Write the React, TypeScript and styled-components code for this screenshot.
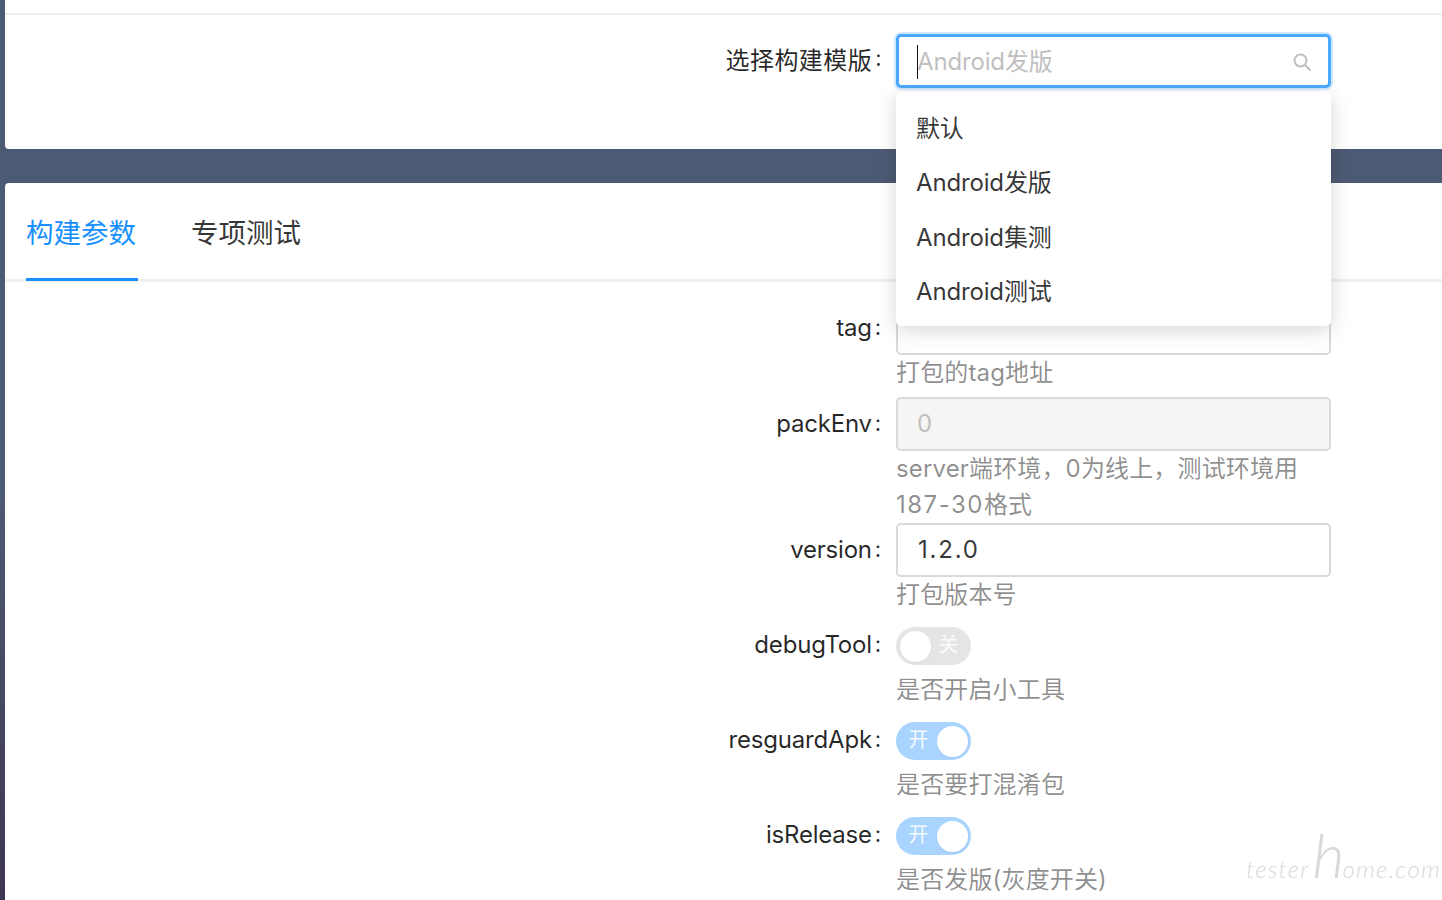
import React from "react";
import styled, { createGlobalStyle } from "styled-components";

const Global = createGlobalStyle`
  html, body { margin: 0; padding: 0; height: 900px; overflow: hidden; }
  body {
    font-family: Inter, "Noto Sans CJK SC", sans-serif;
  }
`;

const Page = styled.div`
  position: relative;
  height: 900px;
  overflow: hidden;
  padding-left: 5px;
  box-sizing: border-box;
  background: linear-gradient(180deg, #4d5a73 0%, #4d5a73 55%, #3f3552 100%);
  display: flex;
  flex-direction: column;
  gap: 34px;
`;

const Card = styled.section<{ $grow?: boolean }>`
  background: #fff;
  ${(p) =>
    p.$grow
      ? "flex: 1; border-radius: 4px 0 0 0;"
      : "height: 149px; flex: none; border-radius: 0 0 0 4px;"}
`;

const TopRule = styled.div`
  height: 2px;
  margin-top: 13px;
  background: #f0f0f0;
`;

const Row = styled.div<{ $after?: number; $before?: number }>`
  display: grid;
  grid-template-columns: 891px 435px;
  margin-top: ${(p) => p.$before ?? 0}px;
  margin-bottom: ${(p) => p.$after ?? 6}px;
`;

const Label = styled.label<{ $cjk?: boolean; $low?: boolean }>`
  height: 54px;
  display: flex;
  align-items: center;
  justify-content: flex-end;
  padding-right: ${(p) => (p.$cjk ? 14 : 15)}px;
  padding-bottom: ${(p) => (p.$cjk ? 6 : p.$low ? 0 : 2)}px;
  box-sizing: border-box;
  font-size: 24px;
  letter-spacing: ${(p) => (p.$cjk ? 0.45 : -0.2)}px;
  color: rgba(0, 0, 0, 0.85);
`;

const Colon = styled.span`
  margin-left: 3px;
  font-size: 22px;
`;

const Control = styled.div`
  min-width: 0;
`;

const Field = styled.div<{ $focus?: boolean; $off?: boolean }>`
  position: relative;
  height: 54px;
  box-sizing: border-box;
  border-radius: 5px;
  display: flex;
  align-items: center;
  padding: 0 0 ${(p) => (p.$focus ? 4 : 2)}px ${(p) => (p.$focus ? 18 : 20)}px;
  font-size: 24px;
  color: rgba(0, 0, 0, 0.8);
  border: ${(p) => (p.$focus ? "3px solid #4aa9ff" : "2px solid #d9d9d9")};
  background: ${(p) => (p.$off ? "#f5f5f5" : "#fff")};
  ${(p) => p.$focus && "box-shadow: 0 0 0 2px rgba(24, 144, 255, 0.2);"}
`;

const Placeholder = styled.span`
  color: #bfbfbf;
  letter-spacing: -0.15px;
`;

const Dim = styled.span`
  color: #bfbfbf;
  margin-left: -1px;
`;

const Value = styled.span`
  letter-spacing: 1.8px;
`;

const Caret = styled.i`
  position: absolute;
  left: 18px;
  top: 8px;
  width: 1px;
  height: 34px;
  background: #111;
`;

const SearchIcon = styled.svg`
  position: absolute;
  right: 16px;
  top: 15px;
  width: 20px;
  height: 20px;
  color: #bfbfbf;
`;

const Help = styled.div`
  font-size: 24px;
  line-height: 36px;
  letter-spacing: 0.15px;
  color: rgba(0, 0, 0, 0.45);
`;

const HelpNums = styled.span`
  letter-spacing: 1.5px;
`;

const Tabs = styled.nav`
  height: 96px;
  display: flex;
  gap: 53px;
  padding-left: 21px;
  border-bottom: 3px solid #f0f0f0;
  margin-bottom: 19px;
`;

const Tab = styled.div<{ $active?: boolean }>`
  height: 98px;
  width: 112px;
  padding-top: 31px;
  box-sizing: border-box;
  font-size: 27.5px;
  line-height: 38px;
  color: ${(p) => (p.$active ? "#1890ff" : "rgba(0, 0, 0, 0.8)")};
  ${(p) => p.$active && "border-bottom: 3px solid #1890ff;"}
`;

const SwitchWrap = styled.div`
  height: 55px;
  padding-top: 10px;
  box-sizing: border-box;
`;

const Track = styled.div<{ $on?: boolean }>`
  width: 75px;
  height: 38px;
  border-radius: 19px;
  box-sizing: border-box;
  padding: 0 3.5px;
  display: flex;
  align-items: center;
  flex-direction: ${(p) => (p.$on ? "row" : "row-reverse")};
  justify-content: space-between;
  background: ${(p) => (p.$on ? "#a9d4ff" : "#e5e5e5")};
`;

const Knob = styled.span`
  width: 31px;
  height: 31px;
  border-radius: 50%;
  background: #fff;
  box-shadow: 0 1px 2px rgba(0, 0, 0, 0.06);
`;

const SwitchText = styled.span<{ $on?: boolean }>`
  font-size: 20px;
  line-height: 32px;
  color: rgba(255, 255, 255, 0.9);
  margin: ${(p) => (p.$on ? "-3px 0 0 9px" : "-3px 9px 0 0")};
`;

const Menu = styled.ul`
  position: absolute;
  left: 896px;
  top: 92px;
  width: 435px;
  margin: 0;
  padding: 8px 0;
  list-style: none;
  background: #fff;
  border-radius: 5px;
  box-shadow: 0 4px 20px rgba(0, 0, 0, 0.17);
`;

const MenuItem = styled.li`
  height: 54.5px;
  box-sizing: border-box;
  display: flex;
  align-items: center;
  padding: 0 0 2px 20px;
  font-size: 24px;
  letter-spacing: -0.15px;
  color: rgba(0, 0, 0, 0.8);
`;

const Watermark = styled.div`
  position: absolute;
  left: 1246px;
  top: 826px;
  height: 56px;
  display: flex;
  align-items: baseline;
  white-space: nowrap;
  font-family: Lato, sans-serif;
  font-style: italic;
  font-weight: 300;
  font-size: 24px;
  line-height: 56px;
  letter-spacing: 1.3px;
  color: #d8d8d8;
`;

const WatermarkH = styled.span`
  font-size: 62px;
  line-height: 56px;
  font-weight: 300;
  letter-spacing: -2px;
  margin-left: 3px;
`;

function Switch({ on }: { on?: boolean }) {
  return (
    <SwitchWrap>
      <Track $on={on}>
        <SwitchText $on={on}>{on ? "开" : "关"}</SwitchText>
        <Knob />
      </Track>
    </SwitchWrap>
  );
}

function FormLabel({ children, cjk, low }: { children: React.ReactNode; cjk?: boolean; low?: boolean }) {
  return (
    <Label $cjk={cjk} $low={low}>
      {children}
      <Colon>:</Colon>
    </Label>
  );
}

export default function App() {
  return (
    <Page>
      <Global />
      <Card>
        <TopRule />
        <Row $before={19} $after={0}>
          <FormLabel cjk>选择构建模版</FormLabel>
          <Control>
            <Field $focus>
              <Caret />
              <Placeholder>Android发版</Placeholder>
              <SearchIcon viewBox="0 0 20 20" fill="none" stroke="currentColor" strokeWidth="2" strokeLinecap="round">
                <circle cx="8.5" cy="8.5" r="6" />
                <path d="M13 13l5 5" />
              </SearchIcon>
            </Field>
          </Control>
        </Row>
      </Card>
      <Card $grow>
        <Tabs>
          <Tab $active>构建参数</Tab>
          <Tab>专项测试</Tab>
        </Tabs>
        <Row>
          <FormLabel>tag</FormLabel>
          <Control>
            <Field />
            <Help>打包的tag地址</Help>
          </Control>
        </Row>
        <Row $after={0}>
          <FormLabel>packEnv</FormLabel>
          <Control>
            <Field $off>
              <Dim>0</Dim>
            </Field>
            <Help>
              server端环境，0为线上，测试环境用<HelpNums>187-30</HelpNums>格式
            </Help>
          </Control>
        </Row>
        <Row $after={4}>
          <FormLabel>version</FormLabel>
          <Control>
            <Field>
              <Value>1.2.0</Value>
            </Field>
            <Help>打包版本号</Help>
          </Control>
        </Row>
        <Row $after={4}>
          <FormLabel low>debugTool</FormLabel>
          <Control>
            <Switch />
            <Help>是否开启小工具</Help>
          </Control>
        </Row>
        <Row $after={4}>
          <FormLabel low>resguardApk</FormLabel>
          <Control>
            <Switch on />
            <Help>是否要打混淆包</Help>
          </Control>
        </Row>
        <Row>
          <FormLabel low>isRelease</FormLabel>
          <Control>
            <Switch on />
            <Help>是否发版(灰度开关)</Help>
          </Control>
        </Row>
      </Card>
      <Menu>
        <MenuItem>默认</MenuItem>
        <MenuItem>Android发版</MenuItem>
        <MenuItem>Android集测</MenuItem>
        <MenuItem>Android测试</MenuItem>
      </Menu>
      <Watermark>
        tester<WatermarkH>h</WatermarkH>ome.com
      </Watermark>
    </Page>
  );
}
